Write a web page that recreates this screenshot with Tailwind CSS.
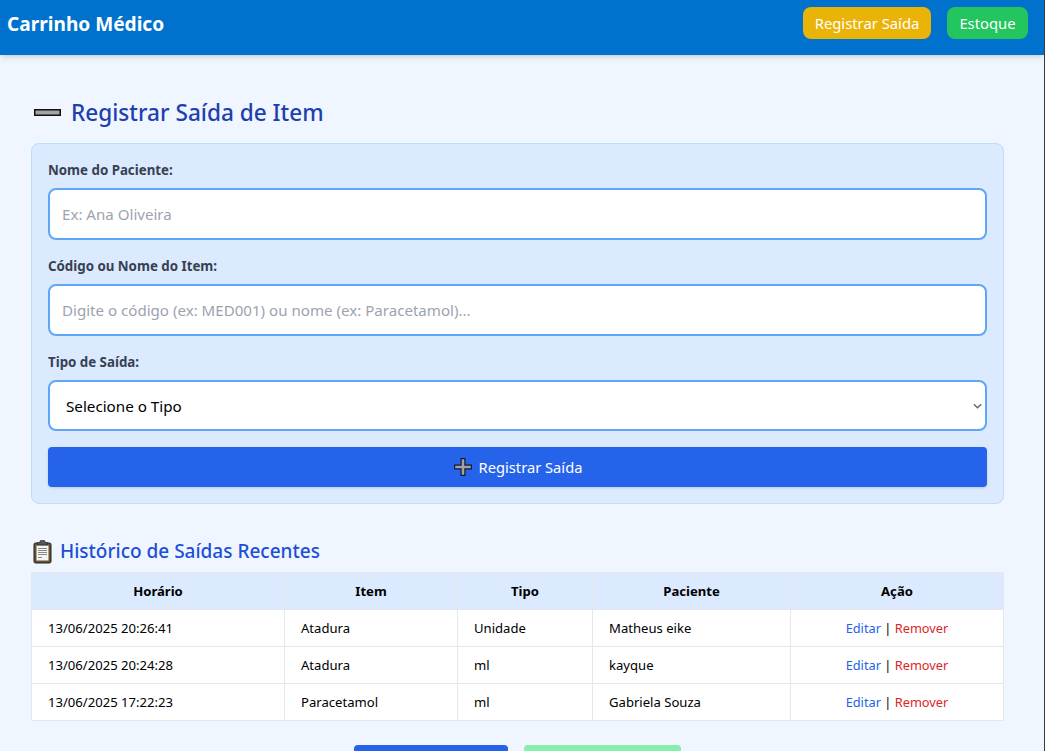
<!DOCTYPE html>
<html lang="pt-BR">

<head>
  <meta charset="UTF-8">
  <title>Carrinho Médico</title>
  <script src="https://cdn.jsdelivr.net/npm/@tailwindcss/browser@4"></script>
</head>

<body class="bg-[#eff6ff] font-['Noto_Sans',sans-serif] text-black h-[751px] overflow-hidden border-r border-[#3a3a3a]">

  <!-- Cabeçalho -->
  <header class="bg-[#0072ce] h-[55px] pl-[7px] pr-4 pb-[9px] flex items-center justify-between shadow-md">
    <h1 class="text-[19.1px] font-bold text-white mt-[2px]">Carrinho Médico</h1>
    <nav class="flex gap-4">
      <a class="w-[128px] h-8 flex items-center justify-center rounded-lg bg-[#eab308] text-white text-[14.8px]">Registrar Saída</a>
      <a class="w-[81px] h-8 flex items-center justify-center rounded-lg bg-[#22c55e] text-white text-[14.8px]">Estoque</a>
    </nav>
  </header>

  <main class="pt-10 pl-[31px] pr-[40px]">

    <!-- Formulário -->
    <h2 class="h-[36px] flex items-center gap-[10px] pl-[2px] text-[22.6px] font-medium text-[#1e40af] mb-[12px]">
      <svg class="w-[28px] h-[28px]" viewBox="0 0 28 28">
        <rect x="1" y="10" width="27" height="7" fill="#111"/>
        <rect x="2.500" y="11.500" width="24" height="4" fill="#a3a3a3"/>
      </svg>
      Registrar Saída de Item
    </h2>

    <form class="bg-[#dbeafe] border border-[#bfdbfe] rounded-lg h-[361px] px-4 pt-[16px]">
      <label class="block h-[28px] pt-[1px] text-[13.3px] font-bold text-[#374151]">Nome do Paciente:</label>
      <input placeholder="Ex: Ana Oliveira" class="w-full h-[52px] block bg-white border-2 border-[#60a5fa] rounded-lg px-3 text-[15.1px] placeholder:text-[#9ca3af] mb-4">

      <label class="block h-[28px] pt-[1px] text-[13.3px] font-bold text-[#374151]">Código ou Nome do Item:</label>
      <input placeholder="Digite o código (ex: MED001) ou nome (ex: Paracetamol)..." class="w-full h-[52px] block bg-white border-2 border-[#60a5fa] rounded-lg px-3 text-[15.1px] placeholder:text-[#9ca3af] mb-4">

      <label class="block h-[28px] pt-[1px] text-[13.3px] font-bold text-[#374151]">Tipo de Saída:</label>
      <div class="h-[51px] bg-white border-2 border-[#60a5fa] rounded-lg pl-4 pr-[3px] flex items-center justify-between text-[15.2px] mb-4">
        <span class="pt-[2px]">Selecione o Tipo</span>
        <svg class="w-[9px] h-[6px]" viewBox="0 0 10 6" fill="none" stroke="#666" stroke-width="1.6"><path d="M1 1l4 4 4-4"/></svg>
      </div>

      <button type="button" class="w-full h-10 bg-[#2563eb] rounded text-white text-[14.7px] flex items-center justify-center gap-[6px] shadow-sm">
        <svg class="w-[20px] h-[20px]" viewBox="0 0 20 20">
          <path d="M7.500 1h5v6.500H19v5h-6.500V19h-5v-6.500H1v-5h6.500z" fill="#111a33"/>
          <path d="M8.700 2.200h2.600v6.500h6.500v2.600h-6.500v6.500H8.700v-6.500H2.200V8.700h6.500z" fill="#a3a3a3"/>
        </svg>
        Registrar Saída
      </button>
    </form>

    <!-- Histórico -->
    <h3 class="h-7 mt-[33px] mb-[7px] flex items-center gap-[5px] text-[19px] font-medium text-[#1d4ed8]">
      <svg class="w-[24px] h-[26px]" viewBox="0 0 24 26">
        <rect x="3" y="5" width="17" height="20" rx="1.500" fill="#6b4f33" stroke="#222" stroke-width="1"/>
        <rect x="5.500" y="7.500" width="12" height="15" fill="#f5f5f2"/>
        <path d="M9.500 2.500h4l1 2h2v2.500h-10V4.500h2z" fill="#555" stroke="#222" stroke-width="0.600"/>
        <path d="M7 10.500h9M7 12.500h9M7 14.500h9M7 16.500h9M7 19.500h4" stroke="#8a8a8a" stroke-width="1"/>
      </svg>
      Histórico de Saídas Recentes
    </h3>

    <table class="w-[973px] table-fixed border-collapse bg-white text-[13.1px]">
      <thead class="bg-[#dbeafe]">
        <tr class="h-[37px] font-bold">
          <th class="w-[253px] border border-[#e5e7eb] pt-[2px]">Horário</th>
          <th class="w-[173px] border border-[#e5e7eb] pt-[2px]">Item</th>
          <th class="w-[135px] border border-[#e5e7eb] pt-[2px]">Tipo</th>
          <th class="w-[198px] border border-[#e5e7eb] pt-[2px]">Paciente</th>
          <th class="border border-[#e5e7eb] pt-[2px]">Ação</th>
        </tr>
      </thead>
      <tbody>
        <tr class="h-[37px]">
          <td class="border border-[#e5e7eb] px-4 pt-[2px]">13/06/2025 20:26:41</td>
          <td class="border border-[#e5e7eb] px-4 pt-[2px]">Atadura</td>
          <td class="border border-[#e5e7eb] px-4 pt-[2px]">Unidade</td>
          <td class="border border-[#e5e7eb] px-4 pt-[2px]">Matheus eike</td>
          <td class="border border-[#e5e7eb] px-4 pt-[2px] text-center text-[12.8px]"><a class="text-[#2563eb]">Editar</a> | <a class="text-[#dc2626]">Remover</a></td>
        </tr>
        <tr class="h-[37px]">
          <td class="border border-[#e5e7eb] px-4 pt-[2px]">13/06/2025 20:24:28</td>
          <td class="border border-[#e5e7eb] px-4 pt-[2px]">Atadura</td>
          <td class="border border-[#e5e7eb] px-4 pt-[2px]">ml</td>
          <td class="border border-[#e5e7eb] px-4 pt-[2px]">kayque</td>
          <td class="border border-[#e5e7eb] px-4 pt-[2px] text-center text-[12.8px]"><a class="text-[#2563eb]">Editar</a> | <a class="text-[#dc2626]">Remover</a></td>
        </tr>
        <tr class="h-[37px]">
          <td class="border border-[#e5e7eb] px-4 pt-[2px]">13/06/2025 17:22:23</td>
          <td class="border border-[#e5e7eb] px-4 pt-[2px]">Paracetamol</td>
          <td class="border border-[#e5e7eb] px-4 pt-[2px]">ml</td>
          <td class="border border-[#e5e7eb] px-4 pt-[2px]">Gabriela Souza</td>
          <td class="border border-[#e5e7eb] px-4 pt-[2px] text-center text-[12.8px]"><a class="text-[#2563eb]">Editar</a> | <a class="text-[#dc2626]">Remover</a></td>
        </tr>
      </tbody>
    </table>

    <!-- Botões inferiores -->
    <div class="flex justify-center gap-4 mt-6">
      <button type="button" class="w-[154px] h-10 bg-[#2563eb] rounded"></button>
      <button type="button" class="w-[157px] h-10 bg-[#86efac] rounded"></button>
    </div>
  </main>

</body>

</html>
